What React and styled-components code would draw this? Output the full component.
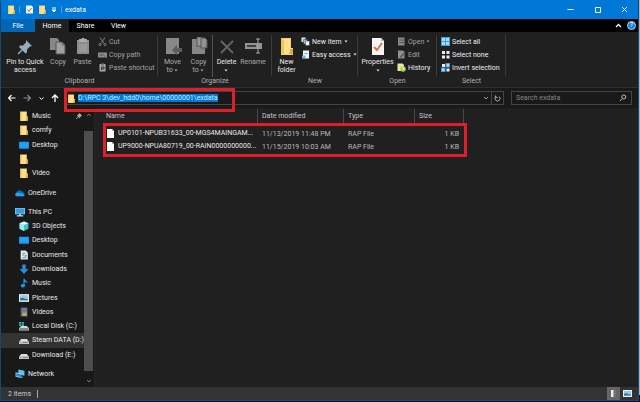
import React, { useEffect, useRef } from "react";
import styled, { createGlobalStyle } from "styled-components";

const quickAccess = [
  { icon: "folder", label: "Music", pinned: true },
  { icon: "folder", label: "comfy" },
  { icon: "desktop", label: "Desktop" },
  { icon: "folder", label: "" },
  { icon: "folder", label: "Video" },
];

const thisPc = [
  { icon: "cube", label: "3D Objects" },
  { icon: "desktop", label: "Desktop" },
  { icon: "document", label: "Documents" },
  { icon: "download", label: "Downloads" },
  { icon: "music", label: "Music" },
  { icon: "picture", label: "Pictures" },
  { icon: "video", label: "Videos" },
  { icon: "system", label: "Local Disk (C:)" },
  { icon: "drive", label: "Steam DATA (D:)", active: true },
  { icon: "drive", label: "Download (E:)" },
];

const files = [
  {
    name: "UP0101-NPUB31633_00-MGS4MAINGAM...",
    date: "11/13/2019 11:48 PM",
    type: "RAP File",
    size: "1 KB",
  },
  {
    name: "UP9000-NPUA80719_00-RAIN0000000000...",
    date: "11/15/2019 10:03 AM",
    type: "RAP File",
    size: "1 KB",
  },
];

const App = () => {
  const address = useRef(null);

  useEffect(() => {
    address.current.focus();
    address.current.select();
  }, []);

  return (
    <Desktop>
      <GlobalStyle />
      <Window>
        <TitleBar>
          <Icon name="folder" />
          <TitleRule />
          <QuickButton aria-label="Properties">
            <Icon name="check" />
          </QuickButton>
          <QuickButton aria-label="New folder">
            <Icon name="folder" />
          </QuickButton>
          <QuickButton aria-label="Customize" narrow>
            <Glyph size={6} viewBox="0 0 6 6">
              <path d="M1 1h4M1 3l2 2 2-2z" fill="#fff" />
            </Glyph>
          </QuickButton>
          <TitleRule />
          <Title>exdata</Title>
          <Control aria-label="Minimize">
            <Glyph size={7} viewBox="0 0 7 7">
              <path d="M0.5 3.5h6" />
            </Glyph>
          </Control>
          <Control aria-label="Maximize">
            <Glyph size={7} viewBox="0 0 7 7">
              <path d="M1.5 1.5h5v5h-5z" />
            </Glyph>
          </Control>
          <Control aria-label="Close">
            <Glyph size={7} viewBox="0 0 7 7">
              <path d="M1 1l5 5M6 1l-5 5" />
            </Glyph>
          </Control>
        </TitleBar>

        <Tabs>
          <Tab kind="file">File</Tab>
          <Tab kind="open">Home</Tab>
          <Tab>Share</Tab>
          <Tab>View</Tab>
          <TabTools>
            <PlainButton aria-label="Collapse the ribbon">
              <Glyph size={7} viewBox="0 0 7 7">
                <path d="M1 5l2.5-2.5L6 5" strokeWidth="1.3" />
              </Glyph>
            </PlainButton>
            <Help>?</Help>
          </TabTools>
        </Tabs>

        <Ribbon>
          <Group width={157} title="Clipboard">
            <BigButton width={44}>
              <Icon name="pin" size={18} />
              <span>
                Pin to Quick
                <br />
                access
              </span>
            </BigButton>
            <BigButton width={22} muted>
              <Icon name="copy" size={18} />
              <span>Copy</span>
            </BigButton>
            <BigButton width={27} muted>
              <Icon name="paste" size={18} />
              <span>Paste</span>
            </BigButton>
            <Stack>
              <Command icon="cut" label="Cut" muted />
              <Command icon="path" label="Copy path" muted />
              <Command icon="shortcut" label="Paste shortcut" muted />
            </Stack>
          </Group>
          <Group width={114} title="Organize">
            <BigButton width={25} muted>
              <Icon name="move" size={18} />
              <span>
                Move
                <br />
                to <Caret />
              </span>
            </BigButton>
            <BigButton width={27} muted>
              <Icon name="copyTo" size={18} />
              <span>
                Copy
                <br />
                to <Caret />
              </span>
            </BigButton>
            <InnerRule />
            <BigButton width={27}>
              <Icon name="delete" size={18} />
              <span>
                Delete
                <br />
                <Caret />
              </span>
            </BigButton>
            <BigButton width={26} muted>
              <Icon name="rename" size={18} />
              <span>Rename</span>
            </BigButton>
          </Group>
          <Group width={86} title="New">
            <BigButton width={25}>
              <Icon name="tallFolder" size={18} />
              <span>
                New
                <br />
                folder
              </span>
            </BigButton>
            <Stack>
              <Command icon="newItem" label="New item" caret />
              <Command icon="easy" label="Easy access" caret />
            </Stack>
          </Group>
          <Group width={79} title="Open">
            <BigButton width={35}>
              <Icon name="properties" size={18} />
              <span>
                Properties
                <br />
                <Caret />
              </span>
            </BigButton>
            <Stack>
              <Command icon="open" label="Open" muted caret />
              <Command icon="edit" label="Edit" muted />
              <Command icon="history" label="History" />
            </Stack>
          </Group>
          <Group width={69} title="Select">
            <Stack>
              <Command icon="selectAll" label="Select all" />
              <Command icon="selectNone" label="Select none" />
              <Command icon="invert" label="Invert selection" />
            </Stack>
          </Group>
        </Ribbon>

        <AddressBar>
          <Navigation>
            <PlainButton aria-label="Back">
              <Glyph size={8} viewBox="0 0 8 8">
                <path d="M7.5 4h-7M3.5 1l-3 3 3 3" strokeWidth="1.2" />
              </Glyph>
            </PlainButton>
            <PlainButton aria-label="Forward">
              <Glyph size={8} viewBox="0 0 8 8" tone="#8a8a8a">
                <path d="M0.5 4h7M4.5 1l3 3-3 3" strokeWidth="1.2" />
              </Glyph>
            </PlainButton>
            <PlainButton aria-label="Recent locations">
              <Glyph size={5} viewBox="0 0 5 5">
                <path d="M0.5 1.5l2 2 2-2" />
              </Glyph>
            </PlainButton>
            <PlainButton aria-label="Up">
              <Glyph size={8} viewBox="0 0 8 8">
                <path d="M4 8V1M1 4l3-3 3 3" strokeWidth="1.3" />
              </Glyph>
            </PlainButton>
          </Navigation>
          <PathBox>
            <Icon name="folder" />
            <PathInput
              ref={address}
              aria-label="Address"
              spellCheck={false}
              defaultValue="D:\RPC 3\dev_hdd0\home\00000001\exdata"
            />
            <PlainButton aria-label="Previous locations">
              <Glyph size={6} viewBox="0 0 6 6" tone="#999">
                <path d="M1 2l2 2 2-2" />
              </Glyph>
            </PlainButton>
            <Refresh aria-label="Refresh">
              <Glyph size={7} viewBox="0 0 7 7" tone="#aaa">
                <path d="M2 1.5a2.5 2.5 0 1 0 3 0M1.5 0.5v2h2" />
              </Glyph>
            </Refresh>
            <PathMark />
          </PathBox>
          <SearchBox>
            <SearchInput aria-label="Search exdata" placeholder="Search exdata" />
            <Glyph size={8} viewBox="0 0 8 8" tone="#bbb">
              <circle cx="4.8" cy="3" r="2" />
              <path d="M3.3 4.5L1 7" />
            </Glyph>
          </SearchBox>
        </AddressBar>

        <Body>
          <Tree>
            {quickAccess.map((item, i) => (
              <Entry key={i} {...item} level={2} />
            ))}
            <Entry icon="cloud" label="OneDrive" level={1} first />
            <Entry icon="pc" label="This PC" level={1} first />
            {thisPc.map((item) => (
              <Entry key={item.label} {...item} level={2} />
            ))}
            <Entry icon="network" label="Network" level={1} first />
          </Tree>
          <ScrollBar>
            <Glyph size={6} viewBox="0 0 6 6" tone="#777">
              <path d="M1 4l2-2 2 2" />
            </Glyph>
            <Thumb />
            <Glyph size={6} viewBox="0 0 6 6" tone="#777">
              <path d="M1 2l2 2 2-2" />
            </Glyph>
          </ScrollBar>
          <Content>
            <FileTable>
              <colgroup>
                <NameCol />
                <DateCol />
                <TypeCol />
                <SizeCol />
              </colgroup>
              <thead>
                <tr>
                  <Heading>Name</Heading>
                  <Heading>Date modified</Heading>
                  <Heading>Type</Heading>
                  <Heading>Size</Heading>
                </tr>
              </thead>
              <tbody>
                {files.map((file) => (
                  <tr key={file.name}>
                    <NameCell>
                      <Icon name="file" size={9} />
                      {file.name}
                    </NameCell>
                    <Cell>{file.date}</Cell>
                    <Cell>{file.type}</Cell>
                    <Cell align="right">{file.size}</Cell>
                  </tr>
                ))}
              </tbody>
            </FileTable>
            <FilesMark />
          </Content>
        </Body>

        <StatusBar>
          <Count>2 items</Count>
          <ViewButton aria-label="Details view" active>
            <Icon name="details" />
          </ViewButton>
          <ViewButton aria-label="Large icons view">
            <Icon name="picture" />
          </ViewButton>
        </StatusBar>
      </Window>
    </Desktop>
  );
};

export default App;

const Group = ({ width, title, children }) => (
  <GroupBox width={width}>
    <GroupBody>{children}</GroupBody>
    <GroupTitle>{title}</GroupTitle>
  </GroupBox>
);

const Command = ({ icon, label, muted, caret }) => (
  <CommandButton muted={muted}>
    <Icon name={icon} />
    {label}
    {caret && <Caret />}
  </CommandButton>
);

const Caret = () => (
  <CaretSvg viewBox="0 0 4 3">
    <path d="M0.5 0.5h3L2 2.5z" fill="currentColor" />
  </CaretSvg>
);

const Entry = ({ icon, label, level, first, active, pinned }) => (
  <TreeItem first={first}>
    <TreeLink href="#" level={level} active={active} aria-label={label || "Folder"}>
      <Icon name={icon} size={10} />
      <span>{label}</span>
      {pinned && (
        <PinMark viewBox="0 0 7 7">
          <path d="M4 0l3 3-1 .5L5 5 4 6 1 3l1-1 1.5-1z" fill="#aaa" />
          <path d="M2.5 4.5L0 7" stroke="#aaa" />
        </PinMark>
      )}
    </TreeLink>
  </TreeItem>
);

const Icon = ({ name, size = 9 }) => (
  <IconSvg size={size} viewBox="0 0 18 18" aria-hidden="true">
    {icons[name]}
  </IconSvg>
);

const icons = {
  folder: (
    <>
      <path d="M2 1h12v9h2v8H2z" fill="#f4cf6b" />
      <path d="M5 2h8v8h2v7H5z" fill="#ffe18c" />
      <path d="M13 11h3v7h-5l2-2z" fill="#d9a93d" />
    </>
  ),
  tallFolder: (
    <>
      <path d="M3 1h10v10h2v7H3z" fill="#f4cf6b" />
      <path d="M5 2h7v9h2v6H5z" fill="#ffe18c" />
      <path d="M3 1l3 2v14l-3-1z" fill="#edc65c" />
      <path d="M12 12h3v5h-4l1-2z" fill="#d9a93d" />
    </>
  ),
  check: (
    <>
      <path d="M2 1h11l3 3v13H2z" fill="#f2f2f2" />
      <path d="M5 9l3 4 5-7" fill="none" stroke="#777" strokeWidth="2" />
    </>
  ),
  properties: (
    <>
      <path d="M3 1h9l3 3v14H3z" fill="#f5f5f5" />
      <path d="M12 1v3h3" fill="#bbb" />
      <path d="M5 10l3 3 5-7" fill="none" stroke="#df7040" strokeWidth="1.8" />
    </>
  ),
  pin: (
    <g transform="translate(0 1)">
      <path d="M10 2l6 6-2 .5-3 3 0 3-1.5 1L3 9l1-1.5h3l3-3z" fill="#98abb9" />
      <path d="M6 12l-4 4" stroke="#98abb9" strokeWidth="1.4" />
    </g>
  ),
  copy: (
    <>
      <path d="M1 1h7l2 2v10H1z" fill="#888" />
      <path d="M7 5h6l3 3v9H7z" fill="#a0a0a0" stroke="#555" />
      <path d="M13 5v3h3" fill="none" stroke="#666" />
    </>
  ),
  paste: (
    <>
      <path d="M3 3h12v14H3z" fill="#8c8c8c" />
      <path d="M5 2h2l1-1h2l1 1h2v3H5z" fill="#aaa" />
      <path d="M5 7h8v8H5z" fill="#999" />
    </>
  ),
  cut: (
    <g fill="none" stroke="#8a8a8a" strokeWidth="1.8">
      <path d="M4 1l8 12M14 1L6 13" />
      <circle cx="4" cy="15" r="2" />
      <circle cx="14" cy="15" r="2" />
    </g>
  ),
  path: (
    <>
      <path d="M0 5h18v10H0z" fill="#8b8b8b" />
      <path d="M3 8l2 4 2-4 2 4 2-4M12 12h3" fill="none" stroke="#444" />
    </>
  ),
  shortcut: (
    <>
      <path d="M3 2h12v15H3z" fill="#aaa" />
      <path d="M6 1h6v4H6z" fill="#777" />
      <path d="M7 14V8h5v4H8" fill="none" stroke="#333" strokeWidth="2" />
    </>
  ),
  move: (
    <>
      <path d="M2 1h13v16H2z" fill="#888" />
      <path d="M18 11h-5V8l-5 5 5 5v-3h5z" fill="#5c5c5c" />
    </>
  ),
  copyTo: (
    <>
      <path d="M2 2h13v15H2z" fill="#858585" />
      <path d="M7 0h4l2 2v7H7z" fill="#999" stroke="#555" />
      <path d="M11 1h4l2 2v8h-6z" fill="#929292" stroke="#555" />
    </>
  ),
  delete: (
    <path d="M3 4l12 12M15 4L3 16" fill="none" stroke="#666" strokeWidth="1.8" />
  ),
  rename: (
    <>
      <path d="M1 6h17v6H1z" fill="#929292" />
      <path d="M3 8h9v2H3z" fill="#3f3f3f" />
      <path d="M12 2h4M14 2v14M12 16h4" fill="none" stroke="#aaa" />
    </>
  ),
  newItem: (
    <>
      <path d="M1 1h8v9H1z" fill="#dce9f3" />
      <path d="M5 5h8v9H5z" fill="#98bfd9" stroke="#333" />
      <path d="M9 8h8v9H9z" fill="#f3f6f8" stroke="#333" />
    </>
  ),
  easy: (
    <>
      <path d="M4 1h12v16H4z" fill="#eef4f8" />
      <path d="M7 6h6v2H7zM2 11h7v6H2z" fill="#5ca9d9" />
      <path d="M3 14l3-3 2 2" fill="none" stroke="#fff" />
    </>
  ),
  open: (
    <>
      <path d="M2 1h13v16H2z" fill="#8a8a8a" />
      <path d="M5 5h2v2H5zM9 5h4v2H9zM5 10h2v2H5zM9 10h4v2H9z" fill="#333" />
    </>
  ),
  edit: (
    <>
      <path d="M2 1h10l3 3v13H2z" fill="#909090" />
      <path d="M6 13l7-8 3 2-7 8-4 2z" fill="#606060" />
    </>
  ),
  history: (
    <>
      <path d="M1 1h10l3 3v12H1z" fill="#f2e69b" />
      <circle cx="12" cy="12" r="5.5" fill="#a4d252" />
      <path d="M12 8v4h3" fill="none" stroke="#fff" strokeWidth="2" />
    </>
  ),
  selectAll: (
    <>
      <path d="M0 0h18v18H0z" fill="#3aa0de" />
      <path d="M2 2h6v6H2zM10 2h6v6h-6zM2 10h6v6H2zM10 10h6v6h-6z" fill="#a9dcfa" />
    </>
  ),
  selectNone: (
    <path d="M2 2h6v6H2zM11 2h6v6h-6zM2 11h6v6H2zM11 11h6v6h-6z" fill="#eee" />
  ),
  invert: (
    <>
      <path d="M9 0h9v9H9zM0 9h9v9H0z" fill="#3aa0de" />
      <path d="M2 2h6v6H2zM11 11h6v6h-6z" fill="#eee" />
      <path d="M11 2h5v5h-5zM2 11h5v5H2z" fill="#a9dcfa" />
    </>
  ),
  desktop: (
    <>
      <path d="M0 3h18v13H0z" fill="#0c87e0" />
      <path d="M1 4h16v10H1z" fill="#24a0f5" />
    </>
  ),
  cloud: (
    <>
      <path d="M2 15a4 4 0 0 1 1-7 5 5 0 0 1 9-2 5 5 0 0 1 3 9z" fill="#0867b8" />
      <path d="M2 15a4 4 0 0 1 2-7l6 1 7 3a3 3 0 0 1-1 3z" fill="#27a0ec" />
    </>
  ),
  pc: (
    <>
      <path d="M0 2h18v11H0z" fill="#a6d8f5" />
      <path d="M1 3h16v9H1z" fill="#2f9de8" />
      <path d="M7 13h4v2h4v2H3v-2h4z" fill="#c3d2dc" />
    </>
  ),
  cube: (
    <>
      <path d="M9 1l8 3v10l-8 4-8-4V4z" fill="#43bdcf" />
      <path d="M1 4l8 3v11l-8-4z" fill="#9ce9ee" />
      <path d="M1 4l8-3 8 3-8 3z" fill="#d5fafa" />
    </>
  ),
  document: (
    <>
      <path d="M3 1h9l4 4v12H3z" fill="#e5e8e8" />
      <path d="M6 6h6M6 9h3M6 14h7" stroke="#52889b" strokeWidth="1.5" />
      <path d="M10 9h4v3h-4z" fill="#65a1b7" />
    </>
  ),
  download: <path d="M6 1h6v8h5l-8 9-8-9h5z" fill="#2691df" />,
  music: (
    <>
      <path d="M8 1h2c0 4 6 4 5 9-1-3-3-3-5-3v7H8z" fill="#159be9" />
      <ellipse cx="7" cy="14" rx="4" ry="3" fill="#159be9" />
    </>
  ),
  picture: (
    <>
      <path d="M0 2h18v14H0z" fill="#e4f1f6" />
      <path d="M2 4h14v10H2z" fill="#8fcbe6" />
      <path d="M2 9h8v2h6v2H2z" fill="#416f83" />
    </>
  ),
  video: (
    <>
      <path d="M3 1h12v16H3z" fill="#777" />
      <path d="M6 2h8v6H6z" fill="#667ca5" />
      <path d="M6 10h8v6H6z" fill="#b2a66e" />
      <path d="M4 1v16" stroke="#222" strokeDasharray="2" />
    </>
  ),
  drive: (
    <>
      <path d="M4 7h10l4 5v4H0v-4z" fill="#dedede" />
      <path d="M1 12h16v3H1z" fill="#888" />
      <path d="M3 13h4v1H3z" fill="#eee" />
    </>
  ),
  system: (
    <>
      <path d="M4 9h10l4 4v4H0v-4z" fill="#d4d8da" />
      <path d="M1 13h16v3H1z" fill="#777" />
      <path d="M0 2h4v3H0zM5 2h4v3H5zM0 6h4v3H0zM5 6h4v3H5z" fill="#24bbc5" />
    </>
  ),
  network: (
    <>
      <path d="M6 1l11 2v9L6 10z" fill="#63c0f3" />
      <path d="M1 6l9 2v8L1 14z" fill="#91d7fb" />
      <path d="M2 8l7 1v5l-7-1z" fill="#268bd0" />
      <path d="M12 12l2 4h-3z" fill="#a9c1ce" />
    </>
  ),
  file: (
    <>
      <path d="M2 0h10l4 4v14H2z" fill="#fff" />
      <path d="M12 0v4h4z" fill="#aaa" />
    </>
  ),
  details: (
    <>
      <path d="M4 2h5v14H4z" fill="#ededed" />
      <path d="M11 3h3v2h-3zM11 8h3v2h-3zM11 13h3v2h-3z" fill="#888" />
    </>
  ),
};

const GlobalStyle = createGlobalStyle`
  * {
    box-sizing: border-box;
  }
  body {
    margin: 0;
    background: #0c0b2e;
    color: #e8e8e8;
    font-family: Roboto, "Open Sans", sans-serif;
    font-size: 7px;
    line-height: 8px;
  }
  button, input {
    margin: 0;
    padding: 0;
    border: 0;
    background: none;
    color: inherit;
    font: inherit;
  }
`;

const Desktop = styled.div`
  height: 100vh;
  padding: 0 1px 1px 0;
  background: linear-gradient(#9fb4cc 0 395px, #0c0b2e 395px);
`;

const Window = styled.div`
  height: 100%;
  display: flex;
  flex-direction: column;
  background: #202020;
  border: 1px solid #17496d;
  border-top: 0;
`;

const TitleBar = styled.header`
  height: 19px;
  flex: none;
  display: flex;
  align-items: center;
  padding-left: 6px;
  background: #0078d7;
  color: #fff;
`;

const TitleRule = styled.span`
  width: 1px;
  height: 7px;
  margin: 0 3px;
  background: #4c9cdb;
`;

const PlainButton = styled.button`
  display: flex;
  align-items: center;
  justify-content: center;
`;

const QuickButton = styled(PlainButton)`
  width: ${(props) => (props.narrow ? "9px" : "13px")};
`;

const Title = styled.h1`
  flex: 1;
  margin: 0;
  font-size: 7px;
  font-weight: 400;
`;

const Control = styled(PlainButton)`
  width: 27px;
  height: 19px;
`;

const Glyph = styled.svg`
  width: ${(props) => props.size}px;
  height: ${(props) => props.size}px;
  flex: none;
  fill: none;
  stroke: ${(props) => (props.tone ? props.tone : "#fff")};
`;

const IconSvg = styled.svg`
  width: ${(props) => props.size}px;
  height: ${(props) => props.size}px;
  flex: none;
`;

const Tabs = styled.nav`
  height: 13px;
  flex: none;
  display: flex;
  background: #000;
`;

const Tab = styled.button`
  width: ${(props) => (props.kind ? "34px" : "33px")};
  background: ${(props) =>
    props.kind === "file" ? "#0067b8" : props.kind === "open" ? "#202020" : "none"};
  color: #fff;
`;

const TabTools = styled.div`
  display: flex;
  align-items: center;
  gap: 5px;
  margin-left: auto;
  padding-right: 2px;
`;

const Help = styled.button`
  width: 9px;
  height: 9px;
  border-radius: 50%;
  border: 1px solid #a5d2f5;
  background: #1683d8;
  color: #fff;
  line-height: 7px;
`;

const Ribbon = styled.section`
  height: 56px;
  flex: none;
  display: flex;
  border-bottom: 1px solid #303030;
`;

const GroupBox = styled.div`
  width: ${(props) => props.width}px;
  padding-top: 3px;
  background: linear-gradient(#3b3b3b, #3b3b3b) right 3px / 1px 41px no-repeat;
`;

const GroupBody = styled.div`
  height: 42px;
  display: flex;
  padding-left: 2px;
`;

const GroupTitle = styled.div`
  text-align: center;
  color: #b0b0b0;
`;

const BigButton = styled.button`
  width: ${(props) => props.width}px;
  flex: none;
  display: flex;
  flex-direction: column;
  align-items: center;
  gap: 3px;
  padding-top: 2px;
  white-space: nowrap;
  color: ${(props) => (props.muted ? "#aaa" : "#e8e8e8")};
`;

const Stack = styled.div`
  padding-left: 2px;
`;

const CommandButton = styled.button`
  height: 13px;
  display: flex;
  align-items: center;
  gap: 2px;
  white-space: nowrap;
  color: ${(props) => (props.muted ? "#a0a0a0" : "#eee")};
`;

const CaretSvg = styled.svg`
  width: 4px;
  height: 3px;
  vertical-align: middle;
`;

const InnerRule = styled.span`
  width: 1px;
  background: #555;
`;

const AddressBar = styled.div`
  height: 20px;
  flex: none;
  display: flex;
  align-items: center;
  gap: 7px;
  padding-right: 6px;
  background: #191919;
`;

const Navigation = styled.div`
  width: 58px;
  display: flex;
  align-items: center;
  justify-content: space-between;
  padding-left: 7px;
`;

const PathBox = styled.div`
  position: relative;
  height: 14px;
  flex: 1;
  display: flex;
  align-items: center;
  gap: 2px;
  border: 1px solid #444;
`;

const PathInput = styled.input`
  height: 10px;
  flex: 1;
  outline: 0;
  color: #fff;
  &::selection {
    background: #0078d7;
    color: #cdf0ff;
  }
`;

const Refresh = styled(PlainButton)`
  width: 12px;
  height: 12px;
  border-left: 1px solid #444;
`;

const Mark = styled.div`
  position: absolute;
  border: 3px solid #de1f2a;
  pointer-events: none;
`;

const PathMark = styled(Mark)`
  top: -4px;
  left: -3px;
  width: 171px;
  height: 24px;
  z-index: 1;
`;

const SearchBox = styled.label`
  width: 121px;
  height: 14px;
  display: flex;
  align-items: center;
  padding: 0 4px;
  border: 1px solid #444;
`;

const SearchInput = styled.input`
  min-width: 0;
  flex: 1;
  outline: 0;
  &::placeholder {
    color: #858585;
  }
`;

const Body = styled.div`
  min-height: 0;
  flex: 1;
  display: flex;
`;

const Tree = styled.ul`
  width: 83px;
  flex: none;
  display: flex;
  flex-direction: column;
  margin: 0;
  padding: 1px 0 6px;
  list-style: none;
  background: #191919;
`;

const TreeItem = styled.li`
  flex: 1;
  display: flex;
  margin-top: ${(props) => (props.first ? "5px" : "0")};
`;

const TreeLink = styled.a`
  flex: 1;
  display: flex;
  align-items: center;
  gap: 3px;
  padding-left: ${(props) => (props.level === 2 ? "18px" : "14px")};
  background: ${(props) => (props.active ? "#333" : "none")};
  color: #e8e8e8;
  text-decoration: none;
  white-space: nowrap;
`;

const PinMark = styled.svg`
  width: 6px;
  height: 6px;
  margin-left: auto;
  margin-right: 2px;
`;

const ScrollBar = styled.div`
  width: 11px;
  flex: none;
  display: flex;
  flex-direction: column;
  align-items: center;
  gap: 7px;
  padding: 4px 1px 3px 0;
  background: #191919;
  border-right: 1px solid #262626;
`;

const Thumb = styled.div`
  width: 9px;
  flex: 1;
  margin-top: 6px;
  background: #4d4d4d;
`;

const Content = styled.main`
  position: relative;
  flex: 1;
  padding: 1px 0 0 7px;
`;

const FileTable = styled.table`
  width: 362px;
  table-layout: fixed;
  border-collapse: collapse;
`;

const NameCol = styled.col`
  width: 156px;
`;

const DateCol = styled.col`
  width: 86px;
`;

const TypeCol = styled.col`
  width: 71px;
`;

const SizeCol = styled.col`
  width: 49px;
`;

const Heading = styled.th`
  height: 18px;
  padding: 0 4px 4px;
  background: linear-gradient(#484848, #484848) right top / 1px 14px no-repeat;
  color: #c5c5c5;
  font-weight: 400;
  text-align: left;
`;

const Cell = styled.td`
  height: 13px;
  padding: 0 5px 0 4px;
  color: #bbb;
  text-align: ${(props) => (props.align ? props.align : "left")};
  white-space: nowrap;
`;

const NameCell = styled(Cell)`
  color: #e8e8e8;
  svg {
    margin-right: 3px;
    vertical-align: middle;
  }
`;

const FilesMark = styled(Mark)`
  top: 15px;
  left: 8px;
  width: 364px;
  height: 34px;
`;

const StatusBar = styled.footer`
  height: 13px;
  flex: none;
  display: flex;
  align-items: center;
  gap: 1px;
  padding: 0 4px 0 7px;
  background: #333;
`;

const Count = styled.span`
  width: 30px;
  margin-right: auto;
  border-right: 1px solid #aaa;
  color: #ccc;
`;

const ViewButton = styled(PlainButton)`
  width: 13px;
  height: 13px;
  background: ${(props) => (props.active ? "#666" : "none")};
`;
